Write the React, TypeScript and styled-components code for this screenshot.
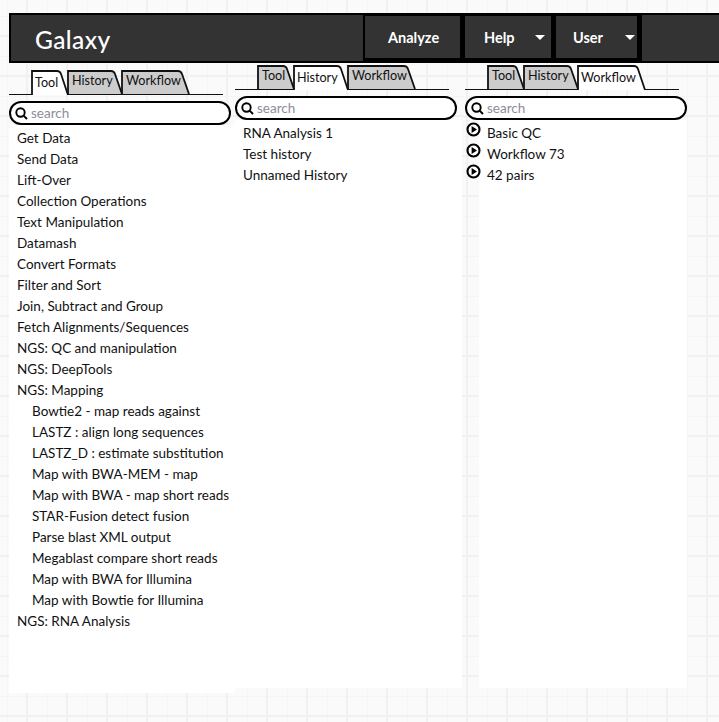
import React from 'react';
import styled, { createGlobalStyle } from 'styled-components';

const GlobalStyle = createGlobalStyle`
  html, body {
    margin: 0;
    padding: 0;
  }
  body {
    width: 719px;
    height: 722px;
    overflow: hidden;
    font-family: "Lato", "Noto Sans", sans-serif;
    color: #111;
    background-color: #fafafa;
    background-image:
      linear-gradient(#f1f1f1 2px, transparent 2px),
      linear-gradient(90deg, #f1f1f1 2px, transparent 2px),
      linear-gradient(#f5f5f5 1px, transparent 1px),
      linear-gradient(90deg, #f5f5f5 1px, transparent 1px);
    background-size: 40px 40px, 40px 40px, 20px 20px, 20px 20px;
    background-position: 0 35px, 26px 0, 0 16px, 7px 0;
  }
`;

const Page = styled.div`
  padding: 13px 0 0 9px;
`;

const Navbar = styled.header`
  height: 50px;
  box-sizing: border-box;
  background: #333;
  border: solid #000;
  border-width: 2px 0 2px 2px;
  display: flex;
  align-items: stretch;
  padding-left: 24px;
`;

const Brand = styled.div`
  flex: 0 0 328px;
  color: #fff;
  font-size: 24.5px;
  font-weight: 500;
  line-height: 50px;
  letter-spacing: 0.4px;
`;

const NavGroup = styled.nav`
  display: flex;
  gap: 5px;
  background: #000;
  padding: 1px 5px 3px 2px;
`;

const NavButton = styled.div<{ $w: number; $left: number; $right?: number }>`
  flex: 0 0 ${p => p.$w}px;
  box-sizing: border-box;
  background: #333;
  display: flex;
  align-items: center;
  justify-content: space-between;
  color: #fff;
  font-size: 14.5px;
  font-weight: 700;
  padding: 0 ${p => p.$right ?? 0}px 0 ${p => p.$left}px;
`;

const Caret = styled.span`
  width: 0;
  height: 0;
  border-left: 5px solid transparent;
  border-right: 5px solid transparent;
  border-top: 5px solid #fff;
`;

const Columns = styled.div`
  display: flex;
  align-items: flex-start;
`;

const Column = styled.section<{ $w: number; $top: number; $left?: number }>`
  flex: 0 0 ${p => p.$w}px;
  width: ${p => p.$w}px;
  padding-top: ${p => p.$top}px;
  padding-left: ${p => p.$left ?? 0}px;
  box-sizing: border-box;
`;

const TabStrip = styled.div`
  height: 25px;
  width: 214px;
  display: flex;
  align-items: flex-end;
  padding-left: 22px;
  box-sizing: border-box;
  border-bottom: 1px solid #111;
  margin-bottom: 6px;
`;

const TabItem = styled.div<{ $w: number; $active?: boolean }>`
  position: relative;
  flex: 0 0 ${p => p.$w}px;
  height: ${p => (p.$active ? 25 : 24)}px;
  margin-right: -2px;
  margin-bottom: ${p => (p.$active ? -1 : 0)}px;
  font-size: 12.6px;
  line-height: 15px;
  z-index: ${p => (p.$active ? 2 : 1)};
  padding: ${p => (p.$active ? '5px 0 0 4px' : '3px 0 0 5px')};
  box-sizing: border-box;
`;

const TabShape = styled.svg`
  position: absolute;
  inset: 0;
  width: 100%;
  height: 100%;
  z-index: -1;
`;

const TabLabel = styled.span`
  position: relative;
`;

const SearchBox = styled.div`
  width: 222px;
  height: 24px;
  box-sizing: border-box;
  background: #fff;
  border: 2px solid #000;
  border-radius: 12px;
  display: flex;
  align-items: center;
  gap: 3px;
  padding-left: 4px;
  font-size: 13.5px;
  color: #8d8d9a;
`;

const ListPanel = styled.div<{ $w: number; $h: number; $inset?: number }>`
  background: #fff;
  width: ${p => p.$w}px;
  min-height: ${p => p.$h}px;
  margin-left: ${p => p.$inset ?? 0}px;
  padding-top: 3px;
  box-sizing: border-box;
`;

const Row = styled.div<{ $indent: number }>`
  height: 21px;
  line-height: 21px;
  padding-left: ${p => p.$indent}px;
  font-size: 13.5px;
  white-space: nowrap;
  position: relative;
`;

const PlayIcon = styled.svg`
  position: absolute;
  left: -13px;
  top: -1px;
  width: 15px;
  height: 15px;
`;

function Tab({ label, width, active }: { label: string; width: number; active?: boolean }) {
  const h = active ? 25 : 24;
  return (
    <TabItem $w={width} $active={active}>
      <TabShape viewBox={`0 0 ${width} ${h}`} preserveAspectRatio="none">
        <path
          d={`M1 ${h} V1 H${width - 12} Q${width - 9} 1 ${width - 8} 4 L${width - 1} ${h}`}
          fill={active ? '#fff' : '#ccc'}
          stroke="#111"
          strokeWidth="1.8"
        />
      </TabShape>
      <TabLabel>{label}</TabLabel>
    </TabItem>
  );
}

function TabBar({ active }: { active: string }) {
  const widths: Record<string, number> = { Tool: 38, History: 56, Workflow: 69 };
  return (
    <TabStrip>
      {['Tool', 'History', 'Workflow'].map(t => (
        <Tab key={t} label={t} width={widths[t]} active={t === active} />
      ))}
    </TabStrip>
  );
}

function Search() {
  return (
    <SearchBox>
      <svg width="13" height="13" viewBox="0 0 13 13" fill="none" stroke="#000" strokeWidth="1.9">
        <circle cx="5.5" cy="5.5" r="4.2" />
        <path d="M8.6 8.6L12 12" />
      </svg>
      search
    </SearchBox>
  );
}

const tools: [string, number][] = [
  ['Get Data', 8],
  ['Send Data', 8],
  ['Lift-Over', 8],
  ['Collection Operations', 8],
  ['Text Manipulation', 8],
  ['Datamash', 8],
  ['Convert Formats', 8],
  ['Filter and Sort', 8],
  ['Join, Subtract and Group', 8],
  ['Fetch Alignments/Sequences', 8],
  ['NGS: QC and manipulation', 8],
  ['NGS: DeepTools', 8],
  ['NGS: Mapping', 8],
  ['Bowtie2 - map reads against', 23],
  ['LASTZ : align long sequences', 23],
  ['LASTZ_D : estimate substitution', 23],
  ['Map with BWA-MEM - map', 23],
  ['Map with BWA - map short reads', 23],
  ['STAR-Fusion detect fusion', 23],
  ['Parse blast XML output', 23],
  ['Megablast compare short reads', 23],
  ['Map with BWA for Illumina', 23],
  ['Map with Bowtie for Illumina', 23],
  ['NGS: RNA Analysis', 8],
];

export default function App() {
  return (
    <Page>
      <GlobalStyle />
      <Navbar>
        <Brand>Galaxy</Brand>
        <NavGroup>
          <NavButton $w={95} $left={23}>Analyze</NavButton>
          <NavButton $w={86} $left={19} $right={6}>
            Help
            <Caret />
          </NavButton>
          <NavButton $w={81} $left={17} $right={2}>
            User
            <Caret />
          </NavButton>
        </NavGroup>
      </Navbar>
      <Columns>
        <Column $w={226} $top={7}>
          <TabBar active="Tool" />
          <Search />
          <ListPanel $w={226} $h={568}>
            {tools.map(([name, indent]) => (
              <Row key={name} $indent={indent}>{name}</Row>
            ))}
          </ListPanel>
        </Column>
        <Column $w={227} $top={2}>
          <TabBar active="History" />
          <Search />
          <ListPanel $w={227} $h={568}>
            {['RNA Analysis 1', 'Test history', 'Unnamed History'].map(name => (
              <Row key={name} $indent={8}>{name}</Row>
            ))}
          </ListPanel>
        </Column>
        <Column $w={225} $top={2} $left={3}>
          <TabBar active="Workflow" />
          <Search />
          <ListPanel $w={208} $h={568} $inset={14}>
            {['Basic QC', 'Workflow 73', '42 pairs'].map(name => (
              <Row key={name} $indent={8}>
                <PlayIcon viewBox="0 0 15 15">
                  <circle cx="7.5" cy="7.5" r="6" fill="#fff" stroke="#000" strokeWidth="2.1" />
                  <path d="M5.6 4L11 7.5L5.6 11Z" fill="#000" />
                </PlayIcon>
                {name}
              </Row>
            ))}
          </ListPanel>
        </Column>
      </Columns>
    </Page>
  );
}
